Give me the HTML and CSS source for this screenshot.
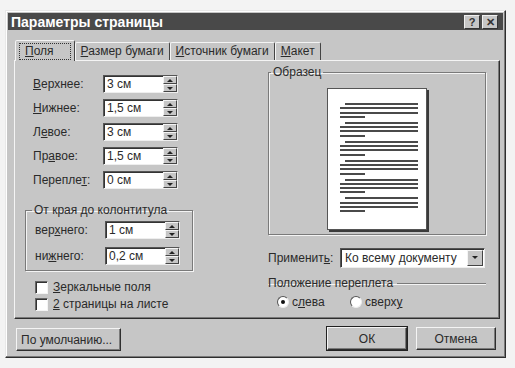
FILE: index.html
```html
<!DOCTYPE html>
<html lang="ru">
<head>
    <meta charset="UTF-8">
    <title>Параметры страницы</title>
    <link rel="stylesheet" href="styles.css">
</head>
<body>
    <div class="dialog">
        <div class="titlebar">
            <span class="title">Параметры страницы</span>
            <div class="title-btns">
                <span class="tbtn">?</span>
                <span class="tbtn">✕</span>
            </div>
        </div>

        <!-- Вкладки -->
        <div class="tabs">
            <div class="tab active"><span class="focus"><u>П</u>оля</span></div>
            <div class="tab"><u>Р</u>азмер бумаги</div>
            <div class="tab"><u>И</u>сточник бумаги</div>
            <div class="tab"><u>М</u>акет</div>
        </div>

        <div class="panel">
            <div class="col-left">
                <div class="field"><label><u>В</u>ерхнее:</label><div class="spin"><span>3 см</span><div class="arrows"><i class="up"></i><i class="down"></i></div></div></div>
                <div class="field"><label><u>Н</u>ижнее:</label><div class="spin"><span>1,5 см</span><div class="arrows"><i class="up"></i><i class="down"></i></div></div></div>
                <div class="field"><label>Л<u>е</u>вое:</label><div class="spin"><span>3 см</span><div class="arrows"><i class="up"></i><i class="down"></i></div></div></div>
                <div class="field"><label>Пр<u>а</u>вое:</label><div class="spin"><span>1,5 см</span><div class="arrows"><i class="up"></i><i class="down"></i></div></div></div>
                <div class="field"><label>Перепле<u>т</u>:</label><div class="spin"><span>0 см</span><div class="arrows"><i class="up"></i><i class="down"></i></div></div></div>

                <fieldset class="group">
                    <legend>От края до колонтитула</legend>
                    <div class="field"><label>вер<u>х</u>него:</label><div class="spin"><span>1 см</span><div class="arrows"><i class="up"></i><i class="down"></i></div></div></div>
                    <div class="field"><label>ни<u>ж</u>него:</label><div class="spin"><span>0,2 см</span><div class="arrows"><i class="up"></i><i class="down"></i></div></div></div>
                </fieldset>

                <div class="check"><span class="box"></span><span><u>З</u>еркальные поля</span></div>
                <div class="check"><span class="box"></span><span><u>2</u> страницы на листе</span></div>
            </div>

            <div class="col-right">
                <fieldset class="sample">
                    <legend>Образец</legend>
                    <div class="page">
                        <div class="para"><i class="ind"></i><i></i><i></i><i class="short"></i></div>
                        <div class="para"><i class="ind"></i><i></i><i></i><i class="short"></i></div>
                        <div class="para"><i class="ind"></i><i></i><i></i><i class="short"></i></div>
                        <div class="para"><i class="ind"></i><i></i><i></i><i class="short"></i></div>
                        <div class="para"><i class="ind"></i><i></i><i></i><i class="short"></i></div>
                        <div class="para"><i class="ind"></i><i></i><i></i><i class="short"></i></div>
                    </div>
                </fieldset>

                <div class="apply">
                    <label>Применит<u>ь</u>:</label>
                    <div class="combo"><span>Ко всему документу</span><span class="drop"><i></i></span></div>
                </div>

                <fieldset class="gutter">
                    <legend>Положение переплета</legend>
                    <div class="radios">
                        <span class="radio"><span class="dot checked"></span><span>с<u>л</u>ева</span></span>
                        <span class="radio"><span class="dot"></span><span>сверх<u>у</u></span></span>
                    </div>
                </fieldset>
            </div>
        </div>

        <div class="footer">
            <button class="btn default-btn">По умолчанию...</button>
            <div class="right-btns">
                <button class="btn ok">ОК</button>
                <button class="btn">Отмена</button>
            </div>
        </div>
    </div>
</body>
</html>
```

FILE: styles.css
```css
* {
    box-sizing: border-box;
}

body {
    margin: 0;
    background: #f3f3f3;
    font-family: "Liberation Sans", Arial, sans-serif;
    font-size: 12px;
    color: #2a2a2a;
}

u {
    text-decoration: underline;
    text-underline-offset: 1px;
}

.dialog {
    width: 501px;
    height: 348px;
    margin: 10px 0 0 5px;
    padding: 2px;
    background: #c6c6c6;
    border: 1px solid;
    border-color: #e8e8e8 #2e2e2e #2e2e2e #e8e8e8;
    box-shadow: inset -1px -1px 0 #7a7a7a, inset 1px 1px 0 #fff;
}

/* Titelleiste */
.titlebar {
    height: 17px;
    background: #494949;
    display: flex;
    align-items: center;
    justify-content: space-between;
    padding: 0 5px 0 3px;
}

.title {
    color: #fff;
    font-weight: bold;
    font-size: 14px;
}

.title-btns {
    display: flex;
    gap: 2px;
}

.tbtn {
    width: 16px;
    height: 14px;
    background: #c6c6c6;
    border: 1px solid;
    border-color: #f0f0f0 #333 #333 #f0f0f0;
    font-size: 11px;
    font-weight: bold;
    line-height: 12px;
    text-align: center;
    color: #333;
}

/* Tabs */
.tabs {
    display: flex;
    margin: 10px 0 0 7px;
    height: 20px;
    align-items: flex-end;
}

.tab {
    height: 18px;
    padding: 0 5px;
    border: 1px solid;
    border-bottom: none;
    border-color: #f4f4f4 #444 transparent #f4f4f4;
    border-radius: 2px 2px 0 0;
    line-height: 16px;
    white-space: nowrap;
}

.tab.active {
    height: 21px;
    margin-bottom: -1px;
    padding: 2px 3px 0;
    background: #c6c6c6;
    position: relative;
    z-index: 1;
}

.focus {
    display: block;
    border: 1px dotted #333;
    padding: 0 16px 0 5px;
    line-height: 15px;
}

.panel {
    width: 486px;
    height: 259px;
    margin-left: 6px;
    border: 1px solid;
    border-color: #f4f4f4 #2e2e2e #2e2e2e #f4f4f4;
    box-shadow: inset -1px -1px 0 #7a7a7a;
    display: flex;
}

.col-left {
    width: 248px;
    padding: 14px 0 0 18px;
}

.field {
    display: flex;
    align-items: center;
    height: 18px;
    margin-bottom: 6px;
}

.field label {
    width: 70px;
}

.spin {
    width: 75px;
    height: 18px;
    background: #fff;
    border: 1px solid;
    border-color: #555 #eee #eee #555;
    box-shadow: inset 1px 1px 0 #333;
    display: flex;
    align-items: center;
    justify-content: space-between;
    padding-left: 3px;
}

.arrows {
    display: flex;
    flex-direction: column;
    width: 14px;
    height: 16px;
}

.arrows i {
    flex: 1;
    background: #c6c6c6;
    border: 1px solid;
    border-color: #f4f4f4 #444 #444 #f4f4f4;
    position: relative;
}

.arrows i::after {
    content: "";
    position: absolute;
    left: 3px;
    top: 1px;
    border: 3px solid transparent;
}

.arrows .up::after {
    top: -1px;
    border-bottom: 3px solid #222;
}

.arrows .down::after {
    top: 2px;
    border-top: 3px solid #222;
}

.group {
    width: 168px;
    margin: 15px 0 0 -8px;
    padding: 4px 0 5px 9px;
    border: 1px solid #7a7a7a;
    box-shadow: 1px 1px 0 #f4f4f4, inset 1px 1px 0 #f4f4f4;
}

.group legend,
.sample legend,
.gutter legend {
    padding: 0 2px;
    margin-left: -3px;
    line-height: 13px;
}

.group .field {
    margin-bottom: 8px;
}

.group .field:last-of-type {
    margin-bottom: 0;
}

.check {
    display: flex;
    align-items: center;
    height: 14px;
    margin: 9px 0 0 2px;
}

.check + .check {
    margin-top: 3px;
}

.box {
    width: 13px;
    height: 13px;
    margin-right: 5px;
    background: #fff;
    border: 1px solid;
    border-color: #666 #f4f4f4 #f4f4f4 #666;
    box-shadow: inset 1px 1px 0 #333;
}

.col-right {
    width: 218px;
    padding-top: 5px;
    margin-left: 5px;
}

.sample {
    height: 169px;
    margin: 0;
    padding: 9px 0 0;
    border: 1px solid #7a7a7a;
    box-shadow: 1px 1px 0 #f4f4f4, inset 1px 1px 0 #f4f4f4;
}

.sample legend {
    margin-left: 2px;
}

.page {
    width: 100px;
    height: 142px;
    margin: 0 auto;
    background: #fff;
    border: 1px solid #555;
    box-shadow: 2px 2px 0 #3a3a3a;
    padding-top: 14px;
}

.para {
    margin-bottom: 4px;
}

.para i {
    display: block;
    height: 2px;
    width: 78px;
    margin: 0 0 2.3px 12px;
    background: #4a4a4a;
}

.para i.ind {
    width: 73px;
    margin-left: 17px;
}

.para i.short {
    width: 25px;
}

.apply {
    display: flex;
    align-items: center;
    margin-top: 13px;
}

.apply label {
    width: 72px;
}

.combo {
    width: 145px;
    height: 20px;
    background: #fff;
    border: 1px solid;
    border-color: #555 #eee #eee #555;
    box-shadow: inset 1px 1px 0 #333;
    display: flex;
    align-items: center;
    justify-content: space-between;
    padding-left: 4px;
}

.drop {
    width: 16px;
    height: 16px;
    margin-right: 1px;
    background: #c6c6c6;
    border: 1px solid;
    border-color: #f4f4f4 #444 #444 #f4f4f4;
    position: relative;
}

.drop i {
    position: absolute;
    left: 4px;
    top: 5px;
    border: 3px solid transparent;
    border-top: 3px solid #222;
}

.gutter {
    margin: 9px 0 0;
    padding: 5px 0 0 9px;
    border: none;
    border-top: 1px solid #7a7a7a;
    box-shadow: inset 0 1px 0 #f4f4f4;
}

.gutter legend {
    padding: 0 4px 0 0;
    margin-left: -9px;
}

.radios {
    display: flex;
    align-items: center;
}

.radio {
    display: flex;
    align-items: center;
    width: 73px;
}

.dot {
    width: 12px;
    height: 12px;
    margin-right: 3px;
    border-radius: 50%;
    background: #fff;
    border: 1px solid;
    border-color: #555 #eee #eee #555;
    position: relative;
}

.dot.checked::after {
    content: "";
    position: absolute;
    left: 3px;
    top: 3px;
    width: 4px;
    height: 4px;
    border-radius: 50%;
    background: #111;
}

/* Untere Schaltflächen */
.footer {
    display: flex;
    justify-content: space-between;
    align-items: flex-start;
    padding: 8px 7px 0 8px;
}

.right-btns {
    display: flex;
    gap: 9px;
}

.btn {
    font: inherit;
    color: #2a2a2a;
    height: 23px;
    width: 80px;
    background: #c6c6c6;
    border: 1px solid;
    border-color: #f4f4f4 #2e2e2e #2e2e2e #f4f4f4;
    box-shadow: inset -1px -1px 0 #7a7a7a;
    padding: 0;
}

.default-btn {
    width: 105px;
    margin-top: 1px;
    text-align: left;
    padding-left: 4px;
}

.btn.ok {
    outline: 1px solid #222;
}
```
